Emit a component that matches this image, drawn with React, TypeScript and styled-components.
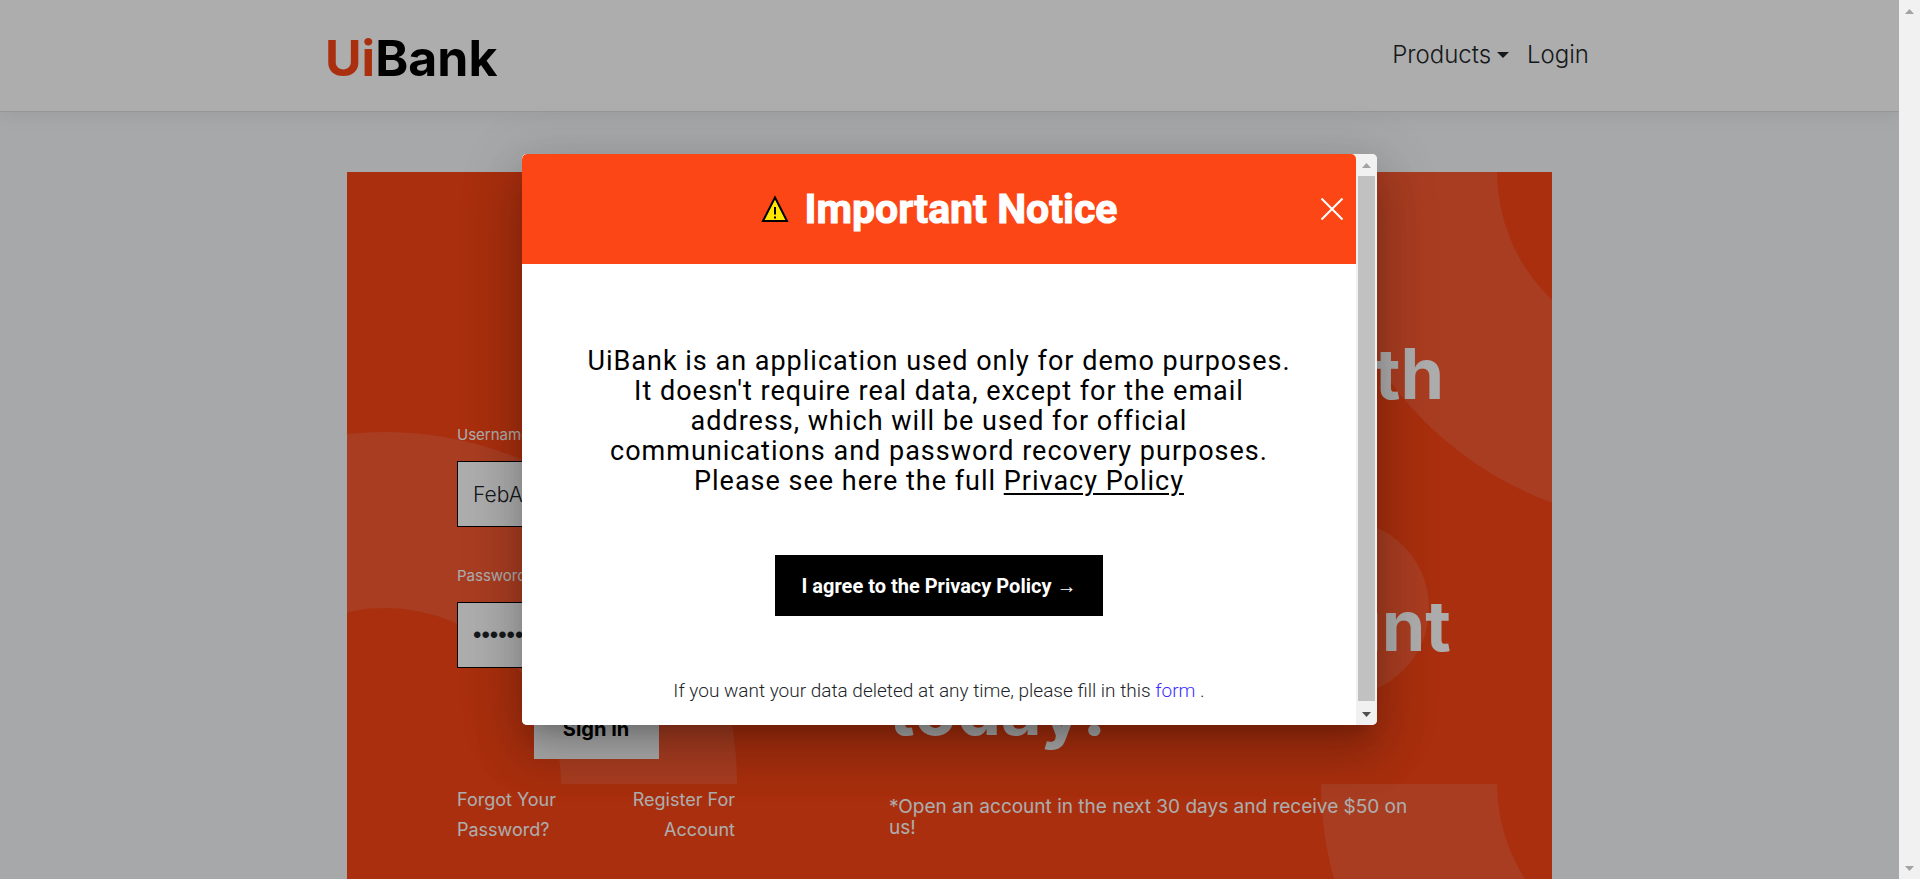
import React from "react";
import styled, { createGlobalStyle } from "styled-components";

const brand = "#fa4616";
const ui = `Inter, "Open Sans", sans-serif`;

const GlobalStyle = createGlobalStyle`
  *, *::before, *::after { box-sizing: border-box; }
  body { margin: 0; font-family: ${ui}; color: #212529; background: #f6f8fa; }
`;

const Shell = styled.div`
  display: flex;
  height: 100vh;
  overflow: hidden;
`;

const Page = styled.div`
  position: relative;
  flex: 1;
  min-width: 0;
  overflow: hidden;
  display: flex;
  flex-direction: column;
`;

const Header = styled.header`
  position: relative;
  background: #fff;
  border-bottom: 1px solid #dcdfe1;
  box-shadow: 0 4px 18px rgba(0, 0, 0, 0.07);
`;

const HeaderInner = styled.div`
  display: flex;
  align-items: center;
  justify-content: space-between;
  max-width: 1279px;
  height: 111px;
  margin: 0 auto;
`;

const Logo = styled.a`
  margin-left: 15px;
  padding-top: 4px;
  font-size: 50px;
  line-height: 60px;
  font-weight: 700;
  color: #000;
  text-decoration: none;
  span { color: ${brand}; }
`;

const Nav = styled.nav`
  display: flex;
  align-items: center;
  gap: 18px;
  padding-bottom: 2px;
`;

const navText = `
  font-family: ${ui};
  font-size: 24px;
  line-height: 30px;
  font-weight: 300;
  color: #212529;
`;

const NavMenu = styled.button`
  ${navText}
  display: flex;
  align-items: center;
  gap: 6px;
  padding: 0;
  border: 0;
  background: none;
`;

const Caret = styled.i`
  border: 6px solid transparent;
  border-top-color: #212529;
  border-bottom: 0;
`;

const NavLink = styled.a`
  ${navText}
  text-decoration: none;
`;

const Hero = styled.main`
  position: relative;
  flex: 1;
  display: flex;
  gap: 154px;
  width: calc(100% - 64px);
  max-width: 1205px;
  margin: 60px auto 0;
  padding: 0 90px 0 110px;
  overflow: hidden;
  background: ${brand};
  color: #fff;
`;

const Pattern = styled.svg`
  position: absolute;
  top: 0;
  right: 0;
  fill: #f95a32;
`;

const LoginForm = styled.form`
  position: relative;
  flex: none;
  width: 278px;
  padding-top: 251px;
`;

const Field = styled.label`
  display: flex;
  flex-direction: column;
  gap: 15px;
  margin-bottom: 37px;
  font-size: 15px;
  line-height: 23px;
`;

const TextInput = styled.input`
  height: 66px;
  padding: 0 15px;
  border: 1px solid #000;
  background: #fff;
  font-family: ${ui};
  font-size: 21px;
  font-weight: 300;
  color: #212529;
  &[type="password"] {
    font-family: "Liberation Sans", sans-serif;
    font-size: 24px;
  }
`;

const SignIn = styled.button`
  display: block;
  width: 125px;
  height: 61px;
  margin: -7px auto 26px;
  border: 0;
  background: #fff;
  font-family: ${ui};
  font-size: 20px;
  font-weight: 700;
  color: #000;
`;

const FormLinks = styled.div`
  display: flex;
  justify-content: space-between;
`;

const FormLink = styled.a<{ $end?: boolean }>`
  width: 110px;
  font-size: 18px;
  line-height: 30px;
  color: #fff;
  text-align: ${(p) => (p.$end ? "right" : "left")};
  text-decoration: none;
`;

const Pitch = styled.section`
  position: relative;
  flex: 1;
  padding-top: 160px;
`;

const PitchTitle = styled.h1`
  margin: 0;
  font-size: 70px;
  line-height: 84px;
  font-weight: 700;
  white-space: nowrap;
`;

const PitchNote = styled.p`
  max-width: 530px;
  margin: 44px 0 0;
  font-size: 19px;
  line-height: 21px;
`;

const Overlay = styled.div`
  position: absolute;
  inset: 0;
  display: flex;
  justify-content: center;
  align-items: center;
  background: rgba(0, 0, 0, 0.32);
`;

const Dialog = styled.div`
  display: flex;
  width: 45%;
  border-radius: 5px;
  overflow: hidden;
  background: #fff;
  font-family: Roboto, sans-serif;
  box-shadow: 0 14px 19px -9px rgba(0, 0, 0, 0.2), 0 30px 48px 4px rgba(0, 0, 0, 0.14),
    0 11px 58px 10px rgba(0, 0, 0, 0.12);
`;

const DialogMain = styled.div`
  flex: 1;
  display: flex;
  flex-direction: column;
  align-items: center;
  min-width: 0;
  background: linear-gradient(#f1f1f1 8px, #fff 8px);
`;

const DialogHeader = styled.header`
  position: relative;
  align-self: stretch;
  display: flex;
  justify-content: center;
  align-items: center;
  gap: 16px;
  height: 110px;
  border-radius: 5px 5px 0 0;
  background: #fc4616;
  color: #fff;
`;

const DialogTitle = styled.h2`
  margin: 0;
  font-size: 41px;
  line-height: 50px;
  font-weight: 700;
  -webkit-text-stroke: 1px currentColor;
`;

const Close = styled.button`
  position: absolute;
  right: 12px;
  display: flex;
  padding: 0;
  border: 0;
  background: none;
  color: inherit;
`;

const Notice = styled.p`
  width: 715px;
  max-width: 92%;
  margin: 82px 0 59px;
  font-size: 27px;
  line-height: 30px;
  letter-spacing: 1px;
  text-align: center;
  color: #000;
  a { color: inherit; text-underline-offset: 3px; }
`;

const Agree = styled.button`
  width: 328px;
  height: 61px;
  border: 0;
  background: #000;
  font-family: Roboto, sans-serif;
  font-size: 20px;
  font-weight: 700;
  color: #fff;
  span { font: 400 20px "Liberation Sans", sans-serif; }
`;

const DialogFoot = styled.p`
  margin: 61px 0 21px;
  font-size: 19px;
  line-height: 27px;
  font-weight: 300;
  color: #212529;
  a { color: #3b2eff; text-decoration: none; }
`;

const Rail = styled.div`
  flex: none;
  display: flex;
  flex-direction: column;
  align-items: center;
  justify-content: space-between;
  width: 21px;
  background: #f1f1f1;
`;

const RailButton = styled.span<{ $active?: boolean }>`
  display: flex;
  align-items: center;
  justify-content: center;
  flex: none;
  height: 22px;
  color: ${(p) => (p.$active ? "#505050" : "#a3a3a3")};
`;

const Thumb = styled.span`
  flex: 1;
  width: 17px;
  margin-bottom: 2px;
  background: #c1c1c1;
`;

function ScrollRail({ thumb }: { thumb?: boolean }) {
  return (
    <Rail aria-hidden="true">
      <RailButton>
        <svg width="9" height="5" fill="currentColor"><path d="M0 5 4.500 0 9 5z" /></svg>
      </RailButton>
      {thumb && <Thumb />}
      <RailButton $active={thumb}>
        <svg width="9" height="5" fill="currentColor"><path d="M0 0H9L4.500 5z" /></svg>
      </RailButton>
    </Rail>
  );
}

export default function App() {
  return (
    <Shell>
      <GlobalStyle />
      <Page>
        <Header>
          <HeaderInner>
            <Logo href="#"><span>Ui</span>Bank</Logo>
            <Nav>
              <NavMenu type="button">Products<Caret /></NavMenu>
              <NavLink href="#login">Login</NavLink>
            </Nav>
          </HeaderInner>
        </Header>
        <Hero>
          <Pattern width="1205" height="707" viewBox="0 0 1205 707" aria-hidden="true">
            <path d="M-314 612A352 352 0 0 1 390 612H214A176 176 0 0 0 -138 612Z" />
            <path d="M974 0A352 352 0 0 0 1326 352V176A176 176 0 0 1 1150 0Z" />
            <path d="M974 612A352 352 0 0 0 1326 964V788A176 176 0 0 1 1150 612Z" />
            <circle cx="994" cy="436" r="88" />
          </Pattern>
          <LoginForm>
            <Field>Username<TextInput type="text" defaultValue="FebAccount" /></Field>
            <Field>Password<TextInput type="password" defaultValue="password12" /></Field>
            <SignIn type="button">Sign In</SignIn>
            <FormLinks>
              <FormLink href="#forgot">Forgot Your Password?</FormLink>
              <FormLink href="#register" $end>Register For Account</FormLink>
            </FormLinks>
          </LoginForm>
          <Pitch>
            <PitchTitle>
              Get moving with<br />UiBank and<br />open a new<br />savings account<br />today!
            </PitchTitle>
            <PitchNote>*Open an account in the next 30 days and receive $50 on us!</PitchNote>
          </Pitch>
        </Hero>
        <Overlay>
          <Dialog role="dialog" aria-modal="true" aria-labelledby="notice-title">
            <DialogMain>
              <DialogHeader>
                <svg width="28" height="28" viewBox="0 0 28 28" aria-hidden="true">
                  <path d="M14 2.500 26 26H2Z" fill="#ffe600" stroke="#000" strokeWidth="2" />
                  <path d="M14 12V19.500M14 21.500V23.500" stroke="#000" strokeWidth="2" />
                </svg>
                <DialogTitle id="notice-title">Important Notice</DialogTitle>
                <Close type="button" aria-label="Close">
                  <svg width="24" height="24" viewBox="0 0 24 24" stroke="currentColor" strokeWidth="2">
                    <path d="M1.500 1.500 22.500 22.500M22.500 1.500 1.500 22.500" />
                  </svg>
                </Close>
              </DialogHeader>
              <Notice>
                UiBank is an application used only for demo purposes. It doesn't require real data,
                except for the email address, which will be used for official communications and
                password recovery purposes.
                <br />
                Please see here the full <a href="#privacy">Privacy Policy</a>
              </Notice>
              <Agree type="button">I agree to the Privacy Policy <span>→</span></Agree>
              <DialogFoot>
                If you want your data deleted at any time, please fill in this <a href="#form">form</a> .
              </DialogFoot>
            </DialogMain>
            <ScrollRail thumb />
          </Dialog>
        </Overlay>
      </Page>
      <ScrollRail />
    </Shell>
  );
}
